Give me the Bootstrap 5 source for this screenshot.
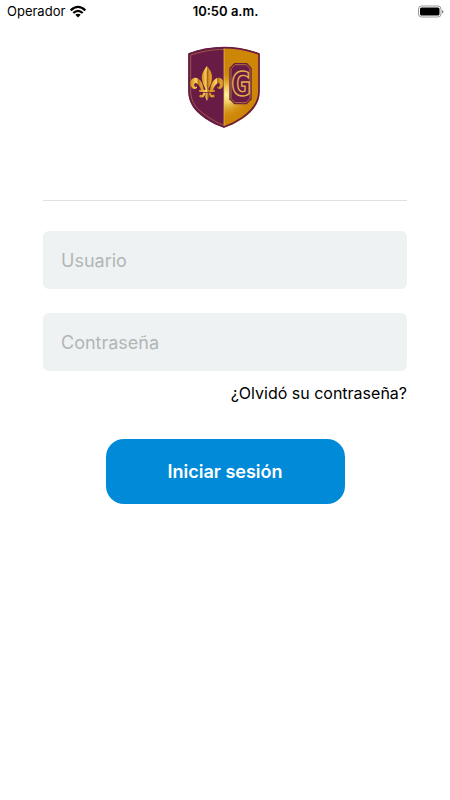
<!DOCTYPE html>
<html lang="es">
<head>
<meta charset="utf-8">
<meta name="viewport" content="width=device-width, initial-scale=1">
<title>Iniciar sesión</title>
<link href="https://cdn.jsdelivr.net/npm/bootstrap@5.3.0/dist/css/bootstrap.min.css" rel="stylesheet">
<style>
body { font-family: Inter, "Liberation Sans", sans-serif; background: #fff; color: #000; }
.status-bar { display: grid; grid-template-columns: 1fr auto 1fr; font-size: 13px; line-height: 22px; padding: 0 6px 0 7px; }
.login-form { padding: 0 43px; }
.divider { border-color: #dfe1e1; opacity: 1; margin: 72px 0 30px; }
.field { height: 58px; padding: 0 18px; border: 0; border-radius: 6px; background: #eef2f3; font-size: 18px; }
.field:focus { background: #eef2f3; }
.field::placeholder { color: #b1b6b6; opacity: 1; }
.forgot-row { margin: 10px 0 34px; }
.forgot { font-size: 16px; line-height: 24px; color: #000; }
.submit { width: 239px; height: 65px; border: 0; border-radius: 18px; background: #008ad8; color: #fff; font-size: 18px; font-weight: 600; }
.submit:hover { background: #007cc3; color: #fff; }
.crest-letter { font-family: "DejaVu Sans Mono", monospace; font-weight: 700; font-size: 100px; }
</style>
<script src="https://cdn.jsdelivr.net/npm/bootstrap@5.3.0/dist/js/bootstrap.bundle.min.js" defer></script>
</head>
<body>
<header class="status-bar align-items-center">
  <div class="d-flex align-items-center gap-1">
    <span>Operador</span>
    <svg width="18" height="13" viewBox="0 0 18 13" aria-hidden="true">
      <g fill="none" stroke="#000" stroke-width="2.3"><path d="M1.7 5.3Q9 -1.5 16.3 5.3"/><path d="M4.3 8Q9 3.7 13.7 8"/></g>
      <path d="M6.3 9.8Q9 7.6 11.7 9.8L9 12.5Z"/>
    </svg>
  </div>
  <span class="fw-semibold">10:50 a.m.</span>
  <svg class="ms-auto" width="27" height="13" viewBox="0 0 27 13" aria-hidden="true">
    <rect x="1.5" y="1" width="22.5" height="11" rx="3" fill="none" stroke="#999"/>
    <rect x="3" y="2.5" width="19.5" height="8" rx="1.5"/>
    <path d="M25 5v3.5q1.5-.5 1.5-1.75T25 5" fill="#888"/>
  </svg>
</header>

<main class="login-form">
  <div class="text-center pt-4">
    <svg class="d-block mx-auto" width="74" height="82" viewBox="24 18 222 246" role="img" aria-label="Escudo">
      <defs>
        <radialGradient id="shine" gradientUnits="userSpaceOnUse" cx="138" cy="165" r="72">
          <stop offset="0" stop-color="#fff3a0"/><stop offset=".35" stop-color="#f3d66c" stop-opacity=".85"/><stop offset="1" stop-color="#d08a0c" stop-opacity="0"/>
        </radialGradient>
        <linearGradient id="lily" x1="0" y1="0" x2="1" y2="0">
          <stop offset="0" stop-color="#d18c16"/><stop offset=".3" stop-color="#eebc48"/><stop offset=".5" stop-color="#ffd96e"/><stop offset=".55" stop-color="#b96d10"/><stop offset=".8" stop-color="#e0a535"/><stop offset="1" stop-color="#c57d12"/>
        </linearGradient>
        <clipPath id="shield"><path d="M132 21C98 21 61 27 25 40V153C25 192 47 216 76 236C96 249 114 257 132 263C150 257 168 249 188 236C217 216 239 192 239 153V40C203 27 166 21 132 21Z"/></clipPath>
      </defs>
      <g clip-path="url(#shield)">
        <path d="M20 18H132V266H20Z" fill="#681b45"/>
        <path d="M132 18H244V266H132Z" fill="#ce8607"/>
        <path d="M132 18H244V266H132Z" fill="url(#shine)"/>
        <path d="M132 21V262" stroke="#efc35c" stroke-width="2"/>
      </g>
      <path d="M132 23C98 23 63 29 27 42V153C27 190 49 214 77 233C97 247 114 255 132 261C150 255 167 247 187 233C215 214 237 190 237 153V42C201 29 166 23 132 23Z" fill="none" stroke="#681b45" stroke-width="5"/>
      <path d="M132 28C99 28 65 34 32 45V153C32 187 51 209 80 228C99 241 115 250 132 256" fill="none" stroke="#d19740" stroke-width="1.5"/>
      <g fill="url(#lily)">
        <path d="M81 78C71 91 63 103 66 119C68 133 75 141 78 151H84C87 141 94 133 96 119C99 103 91 91 81 78Z"/>
        <path d="M72 153C71 133 61 112 44 113C32 114 26 132 36 143C43 151 52 147 51 139C47 143 41 140 43 132C47 122 59 136 65 153Z"/>
        <path d="M90 153C91 133 101 112 118 113C130 114 136 132 126 143C119 151 110 147 111 139C115 143 121 140 119 132C115 122 103 136 97 153Z"/>
        <rect x="57" y="149" width="48" height="7" rx="3"/>
        <path d="M76 158C75 172 64 177 57 169L61 163C64 168 69 165 69 158ZM86 158C87 172 98 177 105 169L101 163C98 168 93 165 93 158ZM77 158H85L86 172L81 183L76 172Z"/>
      </g>
      <path d="M81 91V142M81 160V176" stroke="#96500e" stroke-width="2"/>
      <path d="M163 69H201L215 84V178L200 193H163L148 178V84Z" fill="#681b45"/>
      <path d="M165 74H199L210 86V176L198 188H165L153 176V86Z" fill="none" stroke="#d39a3c" stroke-width="2"/>
      <text class="crest-letter" x="182" y="168" text-anchor="middle" fill="#681b45" stroke="#e5b04a" stroke-width="4">G</text>
    </svg>
  </div>
  <hr class="divider">
  <form>
    <input class="form-control field mb-4" id="usuario" type="text" placeholder="Usuario" aria-label="Usuario" autocomplete="username">
    <input class="form-control field" id="clave" type="password" placeholder="Contraseña" aria-label="Contraseña" autocomplete="current-password">
    <div class="forgot-row text-end"><a class="forgot text-decoration-none" href="#">¿Olvidó su contraseña?</a></div>
    <div class="text-center"><button class="btn submit" type="submit">Iniciar sesión</button></div>
  </form>
</main>
</body>
</html>
